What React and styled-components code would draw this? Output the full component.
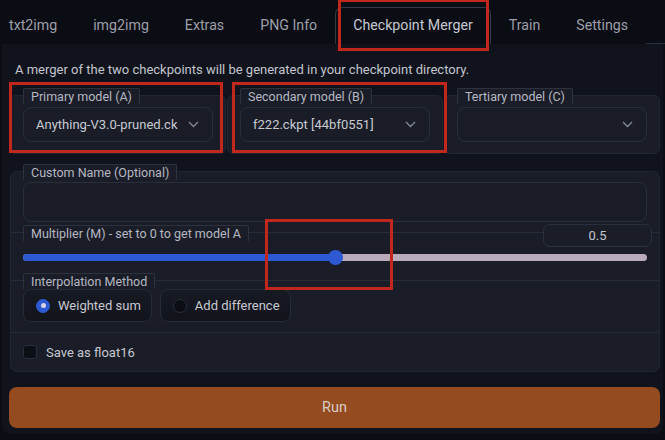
import React from 'react';
import styled, { createGlobalStyle } from 'styled-components';

const GlobalStyle = createGlobalStyle`
  * { box-sizing: border-box; }
  body {
    margin: 0;
    background: #0b0d14;
    font-family: Roboto, "Liberation Sans", sans-serif;
  }
`;

const tabs = ['txt2img', 'img2img', 'Extras', 'PNG Info', 'Checkpoint Merger', 'Train', 'Settings'];

const marks = [
  { x: 338, y: -1, w: 151, h: 52 },
  { x: 9, y: 82, w: 214, h: 71 },
  { x: 232, y: 82, w: 215, h: 71 },
  { x: 265, y: 219, w: 128, h: 71 },
];

function Chevron() {
  return (
    <svg width="11" height="7" viewBox="0 0 11 7">
      <polyline points="1,1 5.5,5.5 10,1" fill="none" stroke="#868995" strokeWidth="1.3" />
    </svg>
  );
}

function ModelSelect({ label, value }) {
  return (
    <ModelBlock>
      <BlockLabel>{label}</BlockLabel>
      <Select>
        <SelectText>{value}</SelectText>
        <Chevron />
      </Select>
    </ModelBlock>
  );
}

export default function App() {
  return (
    <Page>
      <GlobalStyle />
      <TabBar>
        {tabs.map((t) => (
          <Tab key={t} $active={t === 'Checkpoint Merger'}>
            {t}
          </Tab>
        ))}
      </TabBar>
      <TabPanel>
        <Description>
          A merger of the two checkpoints will be generated in your checkpoint directory.
        </Description>
        <ModelRow>
          <ModelSelect label="Primary model (A)" value="Anything-V3.0-pruned.ck" />
          <ModelSelect label="Secondary model (B)" value="f222.ckpt [44bf0551]" />
          <ModelSelect label="Tertiary model (C)" value="" />
        </ModelRow>
        <Panel>
          <Section $bottom={10}>
            <BlockLabel>Custom Name (Optional)</BlockLabel>
            <Textbox />
          </Section>
          <Section $bottom={15}>
            <HeaderRow>
              <BlockLabel>Multiplier (M) - set to 0 to get model A</BlockLabel>
              <NumberBox>0.5</NumberBox>
            </HeaderRow>
            <Slider>
              <Track>
                <Filled style={{ width: '50%' }} />
                <Thumb />
              </Track>
            </Slider>
          </Section>
          <Section $bottom={10}>
            <BlockLabel>Interpolation Method</BlockLabel>
            <RadioRow>
              <RadioOption>
                <RadioDot $checked />
                Weighted sum
              </RadioOption>
              <RadioOption>
                <RadioDot />
                Add difference
              </RadioOption>
            </RadioRow>
          </Section>
          <CheckSection>
            <CheckBox />
            Save as float16
          </CheckSection>
        </Panel>
        <RunButton>Run</RunButton>
      </TabPanel>
      {marks.map((m, i) => (
        <Mark key={i} $x={m.x} $y={m.y} $w={m.w} $h={m.h} />
      ))}
    </Page>
  );
}

const Page = styled.div`
  position: relative;
  width: 665px;
  height: 440px;
  overflow: hidden;
  background: #0b0d14;
`;

const TabBar = styled.div`
  display: flex;
  align-items: flex-end;
  height: 44px;
  margin-left: -9px;
  border-bottom: 1px solid #2c303c;
`;

const Tab = styled.div`
  height: 37px;
  padding: 0 17px 2px;
  display: flex;
  align-items: center;
  font-size: 14.2px;
  color: ${(p) => (p.$active ? '#c6c8d1' : '#9c9fa9')};
  margin-bottom: -1px;
  border: 1px solid ${(p) => (p.$active ? '#363a47' : 'transparent')};
  border-bottom: 1px solid ${(p) => (p.$active ? '#0b0d14' : 'transparent')};
  border-radius: 7px 7px 0 0;
  background: #0b0d14;
`;

const TabPanel = styled.div`
  margin: 0 2px;
  height: 390px;
  padding: 16px 3px 6px 7px;
  background: #10131c;
  border-radius: 0 0 8px 8px;
  display: flex;
  flex-direction: column;
`;

const Description = styled.div`
  height: 20px;
  line-height: 20px;
  padding-left: 6px;
  font-size: 13px;
  color: #c3c5ce;
`;

const ModelRow = styled.div`
  display: flex;
  gap: 1px;
  margin: 15px 0 0 1px;
`;

const ModelBlock = styled.div`
  flex: 1 1 0;
  min-width: 0;
  display: flex;
  flex-direction: column;
  padding: 0 12px 11px;
  background: #1a1d28;
  border: 1px solid #222632;
  border-radius: 6px;
`;

const BlockLabel = styled.div`
  align-self: flex-start;
  height: 16px;
  margin-top: -8px;
  padding: 0 7px;
  line-height: 16px;
  font-size: 12.5px;
  color: #b6b8c2;
  background: #1a1d28;
  border: 1px solid #2e323e;
  border-bottom: none;
  border-radius: 2px 2px 0 0;
  white-space: nowrap;
`;

const Select = styled.div`
  display: flex;
  align-items: center;
  height: 35px;
  margin-top: 3px;
  padding: 0 13px 0 12px;
  border: 1px solid #2a2e3a;
  border-radius: 8px;
  background: #1a1d28;
`;

const SelectText = styled.div`
  flex: 1;
  min-width: 0;
  margin-right: 10px;
  white-space: nowrap;
  font-size: 13px;
  color: #c8cad2;
`;

const Panel = styled.div`
  margin: 17px 0 0 1px;
  background: #1a1d28;
  border: 1px solid #222632;
  border-radius: 7px;
`;

const Section = styled.div`
  display: flex;
  flex-direction: column;
  padding: 0 12px ${(p) => p.$bottom}px;
  border-bottom: 1px solid #282c38;
`;

const Textbox = styled.div`
  height: 40px;
  margin-top: 2px;
  border: 1px solid #2a2e3a;
  border-radius: 8px;
`;

const HeaderRow = styled.div`
  display: flex;
  justify-content: space-between;
  align-items: flex-start;
`;

const NumberBox = styled.div`
  width: 109px;
  height: 23px;
  margin: -9px -5px 0 0;
  display: flex;
  align-items: center;
  justify-content: center;
  font-size: 13px;
  color: #c3c5ce;
  border: 1px solid #2c303c;
  border-radius: 7px;
  background: #1a1d28;
`;

const Slider = styled.div`
  height: 16px;
  margin-top: 2px;
  display: flex;
  align-items: center;
`;

const Track = styled.div`
  flex: 1;
  height: 7px;
  border-radius: 4px;
  background: #b9abb9;
  display: flex;
`;

const Filled = styled.div`
  height: 100%;
  border-radius: 4px 0 0 4px;
  background: #2d5ad2;
`;

const Thumb = styled.div`
  width: 15px;
  height: 15px;
  margin: -4px 0 0 -7px;
  border-radius: 50%;
  background: #2d5ad2;
`;

const RadioRow = styled.div`
  display: flex;
  gap: 8px;
`;

const RadioOption = styled.div`
  display: flex;
  align-items: center;
  gap: 8px;
  height: 33px;
  padding: 0 10px 0 12px;
  font-size: 13px;
  color: #c6c8d0;
  border: 1px solid #272b37;
  border-radius: 8px;
  background: linear-gradient(180deg, #171a23, #12141c);
`;

const RadioDot = styled.div`
  width: 14px;
  height: 14px;
  border-radius: 50%;
  display: flex;
  align-items: center;
  justify-content: center;
  background: ${(p) => (p.$checked ? '#2d5ad2' : '#0c0e15')};
  border: 1px solid ${(p) => (p.$checked ? '#2d5ad2' : '#2a2e3a')};

  &::after {
    content: '';
    width: 5px;
    height: 5px;
    border-radius: 50%;
    background: ${(p) => (p.$checked ? '#d3d6e2' : 'transparent')};
  }
`;

const CheckSection = styled.div`
  display: flex;
  align-items: center;
  gap: 9px;
  height: 38px;
  padding: 0 12px;
  font-size: 13px;
  color: #c6c8d0;
`;

const CheckBox = styled.div`
  width: 14px;
  height: 14px;
  border-radius: 3px;
  background: #0d0f16;
  border: 1px solid #2a2e3a;
`;

const RunButton = styled.div`
  height: 41px;
  margin-top: 15px;
  display: flex;
  align-items: center;
  justify-content: center;
  font-size: 14.5px;
  color: #dacdc5;
  background: #934b1f;
  border-radius: 8px;
`;

const Mark = styled.div`
  position: absolute;
  left: ${(p) => p.$x}px;
  top: ${(p) => p.$y}px;
  width: ${(p) => p.$w}px;
  height: ${(p) => p.$h}px;
  border: 3px solid #c0271d;
  pointer-events: none;
`;
